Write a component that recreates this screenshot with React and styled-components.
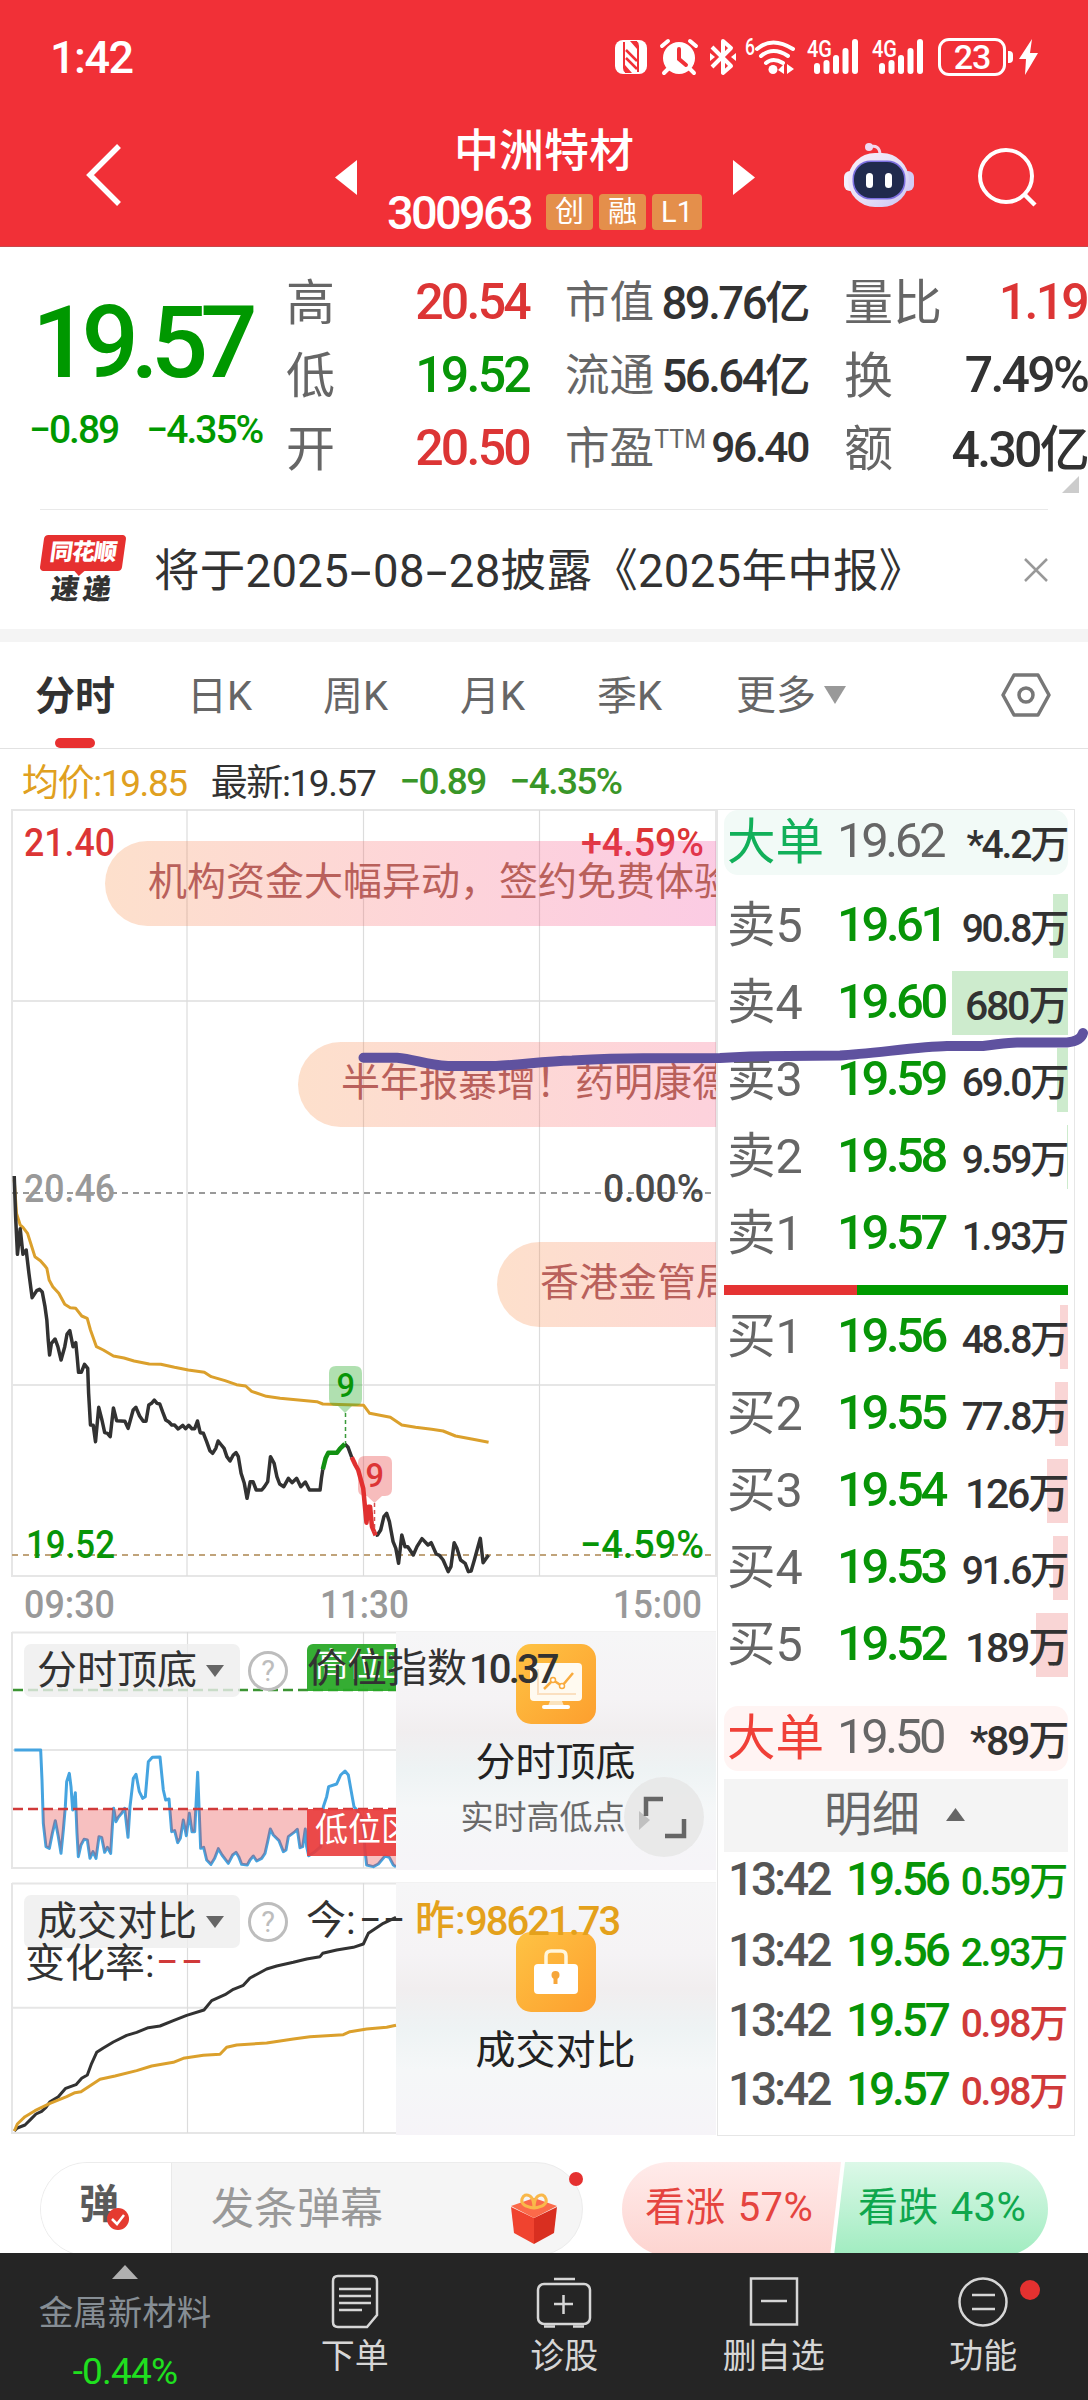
import styled, { createGlobalStyle } from "styled-components";

const RED = "#dc3535";
const GREEN = "#079507";
const DARK = "#323232";
const GREY = "#666";

const GlobalStyle = createGlobalStyle`
    * {
        box-sizing: border-box;
    }
    body {
        margin: 0;
        background: #fff;
        font-family: Roboto, "Noto Sans CJK SC", sans-serif;
        color: ${DARK};
    }
    svg {
        display: block;
        flex: none;
        overflow: visible;
    }
`;

const Page = styled.div`
    position: relative;
    width: 1088px;
    height: 2400px;
    overflow: hidden;
    display: flex;
    flex-direction: column;
`;

/* ---------- header ---------- */

const Header = styled.header`
    height: 247px;
    flex: none;
    background: #f13037;
    color: #fff;
    border-bottom: 1px solid #c9474b;
`;

const StatusBar = styled.div`
    height: 114px;
    padding: 0 50px 0 50px;
    display: flex;
    align-items: center;
    justify-content: space-between;
`;

const Clock = styled.div`
    font-size: 45px;
    font-weight: 500;
    letter-spacing: -1.5px;
`;

const StatusIcons = styled.div`
    display: flex;
    align-items: center;
    height: 38px;
`;

const Battery = styled.div`
    width: 68px;
    height: 38px;
    margin-left: 14px;
    border: 3px solid #fff;
    border-radius: 11px;
    text-align: center;
    font-size: 34px;
    line-height: 33px;
    font-weight: 500;
    letter-spacing: -1px;
`;

const BatteryTip = styled.div`
    width: 5px;
    height: 12px;
    margin: 0 6px 0 2px;
    border-radius: 0 4px 4px 0;
    background: #fff;
`;

const NavBar = styled.div`
    height: 132px;
    display: flex;
    align-items: flex-start;
    padding-left: 87px;
`;

const StockTitle = styled.div`
    width: 376px;
    display: flex;
    flex-direction: column;
    align-items: center;
`;

const StockName = styled.div`
    margin-top: 5px;
    margin-left: -2px;
    font-size: 45px;
    line-height: 65px;
    font-weight: 500;
`;

const StockCode = styled.div`
    display: flex;
    align-items: center;
    gap: 6px;
    height: 56px;
    margin-left: -1px;
    font-size: 47px;
    font-weight: 500;
    letter-spacing: -2.7px;
`;

const Badge = styled.span`
    height: 36px;
    min-width: 47px;
    padding: 0 9px;
    border-radius: 4px;
    background: #e48f4b;
    font-size: 29px;
    line-height: 36px;
    font-weight: 400;
    letter-spacing: 0;
`;

/* ---------- quote ---------- */

const Quote = styled.section`
    position: relative;
    height: 262px;
    flex: none;
    display: flex;
    padding-top: 18px;
`;

const PriceBox = styled.div`
    width: 286px;
    padding-left: 29px;
    color: #009800;
`;

const BigPrice = styled.div`
    margin-top: 15px;
    padding-left: 3px;
    font-size: 101px;
    line-height: 126px;
    font-weight: 500;
    letter-spacing: -8px;
`;

const Change = styled.div`
    display: flex;
    gap: 28px;
    font-size: 39px;
    line-height: 48px;
    font-weight: 500;
    letter-spacing: -2px;
`;

const StatColumn = styled.div`
    width: ${(p) => p.$width}px;
    margin-right: ${(p) => p.$gap}px;
    font-size: ${(p) => p.$size}px;
`;

const Stat = styled.div`
    height: 73px;
    display: flex;
    align-items: center;
    justify-content: space-between;
    white-space: nowrap;
`;

const StatLabel = styled.span`
    padding-bottom: 6px;
    color: ${GREY};
    font-size: 0.98em;
    sup {
        font-size: 25px;
        line-height: 0;
        vertical-align: 16px;
    }
`;

const StatValue = styled.span`
    padding-bottom: ${(p) => (p.$mixed ? 6 : 0)}px;
    color: ${(p) => p.$color || DARK};
    font-size: ${(p) => p.$size || "1em"};
    font-weight: 500;
    letter-spacing: -0.055em;
`;

const Corner = styled.div`
    position: absolute;
    right: 9px;
    bottom: 16px;
    border-left: 17px solid transparent;
    border-bottom: 17px solid #ccc;
`;

/* ---------- news ---------- */

const News = styled.section`
    height: 120px;
    flex: none;
    margin: 0 40px;
    border-top: 1px solid #e9e9e9;
    display: flex;
    align-items: center;
`;

const NewsLogo = styled.div`
    width: 86px;
    height: 70px;
    margin-right: 28px;
    display: flex;
    flex-direction: column;
    align-items: center;
    font-weight: 900;
`;

const LogoTop = styled.div`
    position: relative;
    width: 82px;
    height: 36px;
    border-radius: 4px;
    transform: skewX(-8deg);
    background: #e6302f;
    color: #fff;
    font-size: 23px;
    line-height: 36px;
    text-align: center;
    letter-spacing: -1px;
    &::after {
        content: "";
        position: absolute;
        left: 34px;
        top: 35px;
        border: 6px solid transparent;
        border-top-color: #e6302f;
    }
`;

const LogoBottom = styled.div`
    transform: skewX(-8deg);
    font-size: 28px;
    line-height: 38px;
    letter-spacing: 4px;
`;

const NewsText = styled.div`
    flex: 1;
    padding-bottom: 5px;
    font-size: 45.5px;
    white-space: nowrap;
    letter-spacing: 0.3px;
`;

const Dash = styled.span`
    display: inline-block;
    width: 24px;
    text-align: center;
    transform: scaleX(1.7);
`;

const Band = styled.div`
    height: 13px;
    flex: none;
    background: #f4f4f4;
`;

/* ---------- tabs ---------- */

const Tabs = styled.nav`
    height: 107px;
    flex: none;
    display: flex;
    border-bottom: 1px solid #e2e2e2;
    padding-left: 35px;
`;

const Tab = styled.div`
    position: relative;
    width: ${(p) => p.$width}px;
    height: 106px;
    line-height: 109px;
    font-size: 40px;
    white-space: nowrap;
    color: ${(p) => (p.$active ? DARK : GREY)};
    font-weight: ${(p) => (p.$active ? 700 : 400)};
    &::after {
        content: "";
        display: ${(p) => (p.$active ? "block" : "none")};
        position: absolute;
        left: 20px;
        bottom: 0;
        width: 40px;
        height: 10px;
        border-radius: 5px;
        background: #e83030;
    }
`;

const More = styled(Tab)`
    display: flex;
    align-items: center;
    gap: 8px;
`;

const InfoLine = styled.div`
    height: 60px;
    flex: none;
    padding: 2px 0 0 22px;
    display: flex;
    align-items: center;
    gap: 24px;
    font-size: 37px;
    letter-spacing: -1.4px;
    white-space: nowrap;
    font-weight: 500;
    span:nth-child(1) {
        color: #e0a020;
        font-weight: 400;
    }
    span:nth-child(2) {
        font-weight: 400;
    }
    span:nth-child(n + 3) {
        padding-top: 2px;
        color: #399628;
        letter-spacing: -1.6px;
    }
`;

/* ---------- charts ---------- */

const Body = styled.main`
    height: 1328px;
    flex: none;
    display: flex;
`;

const Charts = styled.div`
    width: 717px;
    display: flex;
    flex-direction: column;
`;

const MainChart = styled.div`
    position: relative;
    height: 823px;
    overflow: hidden;
`;

const Bullet = styled.div`
    position: absolute;
    left: ${(p) => p.$x}px;
    top: ${(p) => p.$y}px;
    right: 1px;
    height: 85px;
    padding-left: 43px;
    overflow: hidden;
    border-radius: 43px 0 0 43px;
    background: linear-gradient(90deg, rgba(247, 131, 51, 0.25), rgba(249, 84, 106, 0.25) 340px, rgba(240, 47, 150, 0.25) 640px);
    color: #b9605b;
    font-size: 39px;
    line-height: 83px;
    white-space: nowrap;
`;

const SubChart = styled.div`
    position: relative;
    height: ${(p) => p.$height}px;
    margin-bottom: ${(p) => p.$gap || 0}px;
`;

const ChipRow = styled.div`
    position: absolute;
    left: 24px;
    top: 12px;
    display: flex;
    align-items: center;
    gap: 8px;
`;

const Chip = styled.div`
    width: 216px;
    height: 53px;
    padding: 0 16px 0 13px;
    border-radius: 7px;
    background: rgba(238, 238, 238, 0.8);
    display: flex;
    align-items: center;
    justify-content: space-between;
    font-size: 40px;
    line-height: 50px;
`;

const Help = styled.div`
    width: 40px;
    height: 40px;
    border: 3px solid #bdbdbd;
    border-radius: 50%;
    color: #bdbdbd;
    font-size: 29px;
    line-height: 35px;
    text-align: center;
`;

const Readout = styled.div`
    position: absolute;
    left: ${(p) => p.$x}px;
    top: ${(p) => p.$y}px;
    font-size: 40px;
    line-height: 48px;
    white-space: nowrap;
    font-weight: ${(p) => p.$weight || 400};
    color: ${(p) => p.$color || DARK};
    letter-spacing: ${(p) => p.$spacing || 0}px;
`;

const ZoneTag = styled.div`
    position: absolute;
    left: 307px;
    top: ${(p) => p.$y}px;
    width: 89px;
    height: 47px;
    overflow: hidden;
    padding-left: 8px;
    border-radius: ${(p) => p.$radius};
    background: ${(p) => p.$color};
    color: #fff;
    font-size: 33px;
    line-height: 42px;
    white-space: nowrap;
`;

const Cover = styled.div`
    position: absolute;
    left: 396px;
    top: 0;
    width: 320px;
    height: 100%;
    padding-top: ${(p) => p.$top}px;
    display: flex;
    flex-direction: column;
    align-items: center;
    background: linear-gradient(#f6f6f7, #f5f3f5 28%, #f1eeef 42%, #eef3f4 58%, #f5f7f8 74%, #f6f4f8);
`;

const CoverTitle = styled.div`
    margin-top: 12px;
    margin-left: -1px;
    font-size: 40px;
    line-height: 54px;
    color: #222;
`;

const CoverNote = styled.div`
    margin-left: -26px;
    font-size: 33px;
    line-height: 55px;
    color: #6a6a6a;
`;

const Expand = styled.div`
    position: absolute;
    left: 624px;
    top: 145px;
    width: 80px;
    height: 80px;
    border-radius: 50%;
    background: rgba(230, 230, 230, 0.85);
`;

/* ---------- order book ---------- */

const Book = styled.aside`
    width: 358px;
    height: 1327px;
    padding: 0 6px;
    border: 1px solid #e6e6e6;
    display: flex;
    flex-direction: column;
`;

const Level = styled.div`
    position: relative;
    height: 64px;
    flex: none;
    margin-bottom: 13px;
    padding: 0 1px 0 3px;
    display: flex;
    align-items: center;
    white-space: nowrap;
`;

const BigOrder = styled(Level)`
    height: 65px;
    margin: ${(p) => p.$margin};
    border-radius: 14px;
    background: ${(p) => p.$bg};
`;

const Depth = styled.div`
    position: absolute;
    right: 0;
    top: 0;
    height: 64px;
`;

const LevelName = styled.span`
    width: 110px;
    padding-bottom: 10px;
    font-size: 48.5px;
    color: ${(p) => p.$color || GREY};
`;

const LevelPrice = styled.span`
    width: 112px;
    padding-bottom: 4px;
    font-size: 49px;
    font-weight: ${(p) => (p.$color ? 400 : 500)};
    letter-spacing: -3.4px;
    color: ${(p) => p.$color || GREEN};
`;

const LevelVolume = styled.span`
    position: relative;
    flex: 1;
    padding-bottom: 3px;
    text-align: right;
    font-size: ${(p) => (p.$large ? 41 : 39)}px;
    font-weight: 500;
    letter-spacing: -2.2px;
`;

const Ratio = styled.div`
    height: 10px;
    flex: none;
    margin: 6px 0 10px;
    background: linear-gradient(90deg, #e53333 133px, #009a00 133px);
`;

const DetailHead = styled.div`
    height: 73px;
    flex: none;
    background: #f4f4f4;
    color: ${GREY};
    display: flex;
    align-items: center;
    padding: 0 0 2px 100px;
    gap: 26px;
    font-size: 48px;
    line-height: 64px;
`;

const Tick = styled.div`
    height: ${(p) => p.$height}px;
    flex: none;
    display: flex;
    align-items: center;
    padding: 0 2px 0 4px;
    font-weight: 500;
    white-space: nowrap;
    letter-spacing: -3.1px;
    font-size: 46px;
    span {
        padding-bottom: 2px;
    }
    span:nth-child(1) {
        width: 118px;
        color: #555;
    }
    span:nth-child(2) {
        width: 103px;
        color: ${GREEN};
    }
    span:nth-child(3) {
        flex: 1;
        padding: 0 0 3px;
        text-align: right;
        font-size: 39px;
        letter-spacing: -2.2px;
        color: ${(p) => p.$color};
    }
`;

/* ---------- bottom ---------- */

const DanmuBar = styled.section`
    height: 116px;
    flex: none;
    padding: 25px 40px 0;
    display: flex;
    gap: 39px;
    overflow: hidden;
`;

const DanmuBox = styled.div`
    position: relative;
    width: 543px;
    height: 94px;
    border: 1px solid #ececec;
    border-radius: 47px;
    background: #f5f5f5;
    display: flex;
`;

const DanmuSwitch = styled.div`
    position: relative;
    width: 131px;
    border-right: 1px solid #e9e9e9;
    border-radius: 47px 0 0 47px;
    background: #fff;
    color: #5a5a5a;
    font-size: 40px;
    line-height: 84px;
    font-weight: 700;
    padding-left: 38px;
    svg {
        position: absolute;
        left: 66px;
        top: 45px;
    }
`;

const DanmuInput = styled.div`
    flex: 1;
    padding-left: 39px;
    font-size: 43px;
    line-height: 92px;
    color: #999;
`;

const Dot = styled.i`
    position: absolute;
    width: ${(p) => p.$size}px;
    height: ${(p) => p.$size}px;
    border-radius: 50%;
    background: #e53130;
    left: ${(p) => p.$x}px;
    top: ${(p) => p.$y}px;
`;

const Gift = styled.div`
    width: 46px;
    padding-top: 30px;
    margin-right: 25px;
`;

const Votes = styled.div`
    width: 426px;
    height: 94px;
    border-radius: 47px;
    overflow: hidden;
    display: flex;
    font-size: 40px;
    line-height: 91px;
    white-space: nowrap;
    word-spacing: 2px;
    letter-spacing: 0.3px;
`;

const VoteUp = styled.div`
    width: 219px;
    padding-left: 23px;
    color: #e5443f;
    background: linear-gradient(#ffebea, #fdd4d0);
    clip-path: polygon(0 0, 100% 0, calc(100% - 11px) 100%, 0 100%);
`;

const VoteDown = styled.div`
    flex: 1;
    margin-left: -7px;
    padding-left: 24px;
    color: #0fa74d;
    background: linear-gradient(#dcf8e8, #a0ecc0);
    clip-path: polygon(11px 0, 100% 0, 100% 100%, 0 100%);
`;

const BottomNav = styled.nav`
    height: 147px;
    flex: none;
    display: flex;
    background: #252525;
    color: #d6d6d6;
    font-size: 34px;
`;

const Sector = styled.div`
    width: 250px;
    padding-top: 12px;
    display: flex;
    flex-direction: column;
    align-items: center;
    color: #868e95;
    font-size: 34.5px;
    line-height: 69px;
    strong {
        font-size: 37px;
        font-weight: 400;
        line-height: 48px;
        letter-spacing: -0.8px;
        color: #1fe01f;
    }
`;

const NavItem = styled.div`
    position: relative;
    width: 209.5px;
    padding-top: 20px;
    display: flex;
    flex-direction: column;
    align-items: center;
    line-height: 55px;
`;

/* Pen stroke drawn by hand over the page */
const PenLayer = styled.svg`
    position: absolute;
    left: 0;
    top: 1020px;
`;

/* ---------- icons ---------- */

const Signal = ({ ml }) => (
    <svg width="52" height="38" viewBox="0 0 52 38" style={{ marginLeft: ml }} fill="#fff">
        <text x="0" y="19" fontSize="23" fontWeight="500" textLength="25" lengthAdjust="spacingAndGlyphs">4G</text>
        <rect x="7" y="25" width="6" height="11" rx="3" />
        <rect x="16.500" y="22" width="6" height="14" rx="3" />
        <rect x="26" y="17" width="6" height="19" rx="3" />
        <rect x="35.500" y="10" width="6" height="26" rx="3" />
        <rect x="45" y="1" width="6" height="35" rx="3" />
    </svg>
);

const NfcIcon = () => (
    <svg width="32" height="38" viewBox="0 0 32 38">
        <rect x="0" y="2" width="32" height="34" rx="8" fill="#fff" />
        <path d="M9 4v26q0 3 2 4M23 34V8q0-3-2-4" stroke="#f13037" strokeWidth="2" fill="none" />
        <path d="M11 12L22 23M11 20L22 31" stroke="#f13037" strokeWidth="2.500" fill="none" />
        <path d="M15 3L22 11V3M17 35L10 27v8" fill="#f13037" />
    </svg>
);

const AlarmIcon = () => (
    <svg width="38" height="38" viewBox="0 0 38 38" style={{ marginLeft: 13 }}>
        <circle cx="19" cy="20" r="16" fill="#fff" />
        <path d="M2 8l6-5M36 8l-6-5M8 31l-4 4M30 31l4 4" stroke="#fff" strokeWidth="4" strokeLinecap="round" />
        <path d="M19 11v10l7 6" stroke="#f13037" strokeWidth="4" fill="none" strokeLinecap="round" />
    </svg>
);

const BluetoothIcon = () => (
    <svg width="26" height="38" viewBox="0 0 26 38" style={{ marginLeft: 12 }}>
        <path d="M2 9l19 19-8 7V3l8 7L2 29" stroke="#fff" strokeWidth="4" fill="none" strokeLinejoin="round" />
        <path d="M0 15l5 4-5 4zM26 15l-5 4 5 4z" fill="#fff" />
    </svg>
);

const WifiIcon = () => (
    <svg width="50" height="38" viewBox="0 0 50 38" style={{ marginLeft: 9 }}>
        <text x="0" y="17" fontSize="23" fontWeight="500" fill="#fff" textLength="10" lengthAdjust="spacingAndGlyphs">6</text>
        <path d="M12 11q15-13 36 0M16 18q12-10 27 0M21 25q7-6 17 0" stroke="#fff" strokeWidth="4" fill="none" strokeLinecap="round" />
        <circle cx="28" cy="31.500" r="4.500" fill="#fff" />
        <path d="M33 32l6-6v10zM49 31l-7-5v10z" fill="#fff" />
    </svg>
);

const BoltIcon = () => (
    <svg width="19" height="36" viewBox="0 0 19 36">
        <path d="M13 0L0 20h7L6 36 19 14h-8z" fill="#fff" />
    </svg>
);

const BackIcon = () => (
    <svg width="40" height="66" viewBox="0 0 40 66" style={{ marginTop: 28, marginLeft: -2, marginRight: 210 }}>
        <path d="M34 4L5 33l29 29" stroke="#fff" strokeWidth="5.500" fill="none" />
    </svg>
);

const Arrow = ({ flip }) => (
    <svg width="22" height="35" viewBox="0 0 22 35" style={{ marginTop: 46 }}>
        <path d={flip ? "M0 0v35l22-17.500z" : "M22 0v35L0 17.500z"} fill="#fff" />
    </svg>
);

const RobotIcon = () => (
    <svg width="70" height="66" viewBox="0 0 70 66" style={{ marginTop: 28, marginLeft: 89 }}>
        <defs>
            <linearGradient id="shell" x1="0" y1="0" x2="1" y2="1">
                <stop offset="0" stopColor="#fbeef8" />
                <stop offset="0.600" stopColor="#e3def7" />
                <stop offset="1" stopColor="#c9c2f2" />
            </linearGradient>
        </defs>
        <path d="M25 5q11-3 11 8" stroke="#f3d6ea" strokeWidth="3" fill="none" />
        <circle cx="25" cy="5" r="4" fill="#efd9f2" />
        <rect x="0" y="29" width="12" height="20" rx="6" fill="#f3effc" />
        <rect x="58" y="29" width="12" height="20" rx="6" fill="#d3ccf5" />
        <rect x="4" y="11" width="61" height="54" rx="27" fill="url(#shell)" />
        <rect x="8.500" y="18.500" width="53" height="39" rx="18" fill="#7c6fe0" />
        <rect x="10" y="20" width="50" height="36" rx="17" fill="#202a4d" />
        <rect x="22" y="31" width="7" height="15" rx="3.500" fill="#fff" />
        <rect x="41" y="31" width="7" height="15" rx="3.500" fill="#fff" />
    </svg>
);

const SearchIcon = () => (
    <svg width="60" height="60" viewBox="0 0 60 60" style={{ marginTop: 33, marginLeft: 64 }}>
        <circle cx="28" cy="29" r="26" stroke="#fff" strokeWidth="4" fill="none" />
        <path d="M46 47l11 11" stroke="#fff" strokeWidth="4.500" />
    </svg>
);

const Caret = ({ up, w = 18, h = 12, color = "#666" }) => (
    <svg width={w} height={h} viewBox="0 0 18 12" preserveAspectRatio="none">
        <path d={up ? "M0 12h18L9 0z" : "M0 0h18L9 12z"} fill={color} />
    </svg>
);

/* ---------- data ---------- */

// the intraday series share one grid of 2.178 x 3 units per pixel
const priceStart = "31,138 34,260 38,373 44,296 50,373 57,360 63,430 70,503 80,482 86,478 92,486 98,530 102,570 105,630 108,675 112,640 120,627 126,650 133,690 141,650 146,612 152,602 159,650 165,638 168,680 171,727 177,727 184,703 191,715 193,790 197,885 203,886 208,935 215,832 222,870 228,908 234,910 240,920 247,834 254,872 272,874 279,895 290,840 296,832 304,858 312,874 318,874 324,825 330,820 336,810 342,820 348,822 354,845 361,870 368,876 374,885 380,885 388,897 398,886 404,896 411,886 418,896 424,896 430,873 436,908 443,910 450,935 457,962 463,970 470,955 475,933 482,945 488,955 494,980 501,993 508,975 514,968 519,980 525,1030 532,1060 538,1105 545,1055 551,1055 558,1080 570,1080 576,1070 583,1055 589,980 597,1000 603,1040 609,1062 618,1070 628,1045 636,1058 646,1045 655,1070 665,1056 674,1080 697,1080 700,1045 703,1018";
const priceRise = "703,1018 709,985 715,968 734,968 741,955 751,942";
const priceTurn = "751,942 758,952 766,982";
const priceFall = "766,982 774,1005 780,1020 791,1075 798,1178 802,1130 806,1130 810,1190 818,1216";
const priceEnd = "818,1216 822,1215 829,1200 836,1160 842,1150 848,1175 856,1235 862,1255 868,1300 875,1215 882,1250 888,1250 900,1275 908,1250 919,1226 932,1245 939,1238 950,1272 957,1276 965,1290 976,1325 982,1310 989,1238 995,1255 1003,1290 1013,1300 1020,1325 1026,1323 1033,1290 1040,1255 1046,1225 1052,1298 1064,1275";
const average = "31,150 36,250 44,285 50,292 60,310 68,345 76,380 88,392 98,408 102,415 107,450 115,470 128,490 141,523 153,533 165,535 178,558 190,565 197,600 210,650 225,660 247,678 270,684 292,693 325,702 350,703 380,712 410,720 445,727 460,740 490,752 515,764 535,768 548,784 580,799 610,805 650,810 690,815 703,822 792,826 805,850 850,862 875,885 905,892 940,898 965,903 992,918 1030,928 1064,937";

const position = "43,390 122,390 126,480 130,610 138,680 148,685 157,640 166,602 175,650 183,700 190,630 196,560 200,485 208,460 213,500 218,570 226,518 231,640 235,710 243,675 252,658 262,660 270,715 279,695 288,715 297,650 305,652 314,697 322,682 332,700 337,620 341,565 348,605 356,590 365,580 374,565 384,652 390,560 400,475 408,463 418,515 428,535 436,530 445,425 457,412 480,411 490,510 497,540 507,537 515,635 524,632 533,668 541,655 550,600 559,647 568,580 576,635 584,635 593,457 602,685 611,682 620,720 633,733 644,715 655,686 666,705 685,730 698,705 708,697 716,710 725,733 742,735 750,720 760,708 770,723 785,715 795,700 803,665 811,627 820,645 837,662 850,695 858,690 865,650 885,635 892,628 900,683 908,680 916,627 920,680 926,707 945,695 962,680 970,560 980,530 986,500 1010,492 1022,465 1035,453 1045,465 1053,510 1062,560 1075,575 1088,600 1095,690 1100,735 1120,740 1135,732 1155,708 1168,712 1180,735 1188,740";

const turnoverToday = "43,1533 52,1524 75,1515 92,1498 108,1482 125,1474 138,1462 150,1445 175,1430 197,1405 228,1394 245,1375 262,1365 275,1330 290,1297 310,1284 340,1266 380,1246 410,1237 445,1223 480,1218 520,1202 560,1186 612,1170 635,1142 675,1124 700,1108 730,1096 750,1074 800,1047 830,1038 880,1027 920,1017 960,1010 968,1000 1010,990 1060,982 1090,972 1105,940 1150,910 1188,892";
const turnoverYesterday = "43,1533 52,1512 75,1490 105,1472 150,1450 200,1430 225,1418 243,1415 300,1378 345,1368 410,1352 455,1338 520,1327 550,1315 610,1306 660,1303 680,1282 710,1275 800,1269 880,1257 930,1250 1030,1244 1050,1235 1100,1227 1160,1222 1188,1216";

const bullets = [
    { x: 105, y: 32, text: "机构资金大幅异动，签约免费体验" },
    { x: 298, y: 233, text: "半年报暴增！药明康德" },
    { x: 497, y: 433, text: "香港金管局" },
];

const sells = [
    { name: "卖5", price: "19.61", volume: "90.8万", depth: 15 },
    { name: "卖4", price: "19.60", volume: "680万", depth: 116, large: true },
    { name: "卖3", price: "19.59", volume: "69.0万", depth: 11 },
    { name: "卖2", price: "19.58", volume: "9.59万", depth: 1 },
    { name: "卖1", price: "19.57", volume: "1.93万", depth: 0 },
];

const buys = [
    { name: "买1", price: "19.56", volume: "48.8万", depth: 8 },
    { name: "买2", price: "19.55", volume: "77.8万", depth: 13 },
    { name: "买3", price: "19.54", volume: "126万", depth: 21, large: true },
    { name: "买4", price: "19.53", volume: "91.6万", depth: 15 },
    { name: "买5", price: "19.52", volume: "189万", depth: 32, large: true },
];

const ticks = [
    { price: "19.56", volume: "0.59万", color: GREEN, height: 71 },
    { price: "19.56", volume: "2.93万", color: GREEN, height: 71 },
    { price: "19.57", volume: "0.98万", color: "#d03a3a", height: 70 },
    { price: "19.57", volume: "0.98万", color: "#d03a3a", height: 67 },
];

/* ---------- parts ---------- */

const Line = ({ points, color = DARK, width = 3.5 }) => (
    <polyline points={points} fill="none" stroke={color} strokeWidth={width} strokeLinejoin="round" vectorEffect="non-scaling-stroke" />
);

const AxisText = ({ x, y, w, color, weight = 500, size = 39.5, children }) => (
    <text x={x} y={y} fill={color} fontSize={size} fontWeight={weight} textLength={w} lengthAdjust="spacingAndGlyphs">
        {children}
    </text>
);

const IntradayChart = () => (
    <MainChart>
        <svg width="717" height="823" viewBox="0 809 717 823">
            <g stroke="#e6e6e6" strokeWidth="2" fill="none">
                <path d="M12 810H716V1576H12zM12 1001H716M12 1385H716" />
                <path d="M187 810V1576M363.500 810V1576M539.500 810V1576" strokeWidth="1.200" stroke="#dcdcdc" />
            </g>
            <path d="M12 1193H716" stroke="#999" strokeWidth="2" strokeDasharray="6 5" />
            <path d="M12 1555H716" stroke="#c0a37a" strokeWidth="2" strokeDasharray="6 5" />
            <AxisText x="24" y="856" w="91" color={RED}>21.40</AxisText>
            <AxisText x="581" y="856" w="123" color={RED}>+4.59%</AxisText>
            <AxisText x="24" y="1202" w="91" color="#999">20.46</AxisText>
            <AxisText x="603" y="1202" w="101" color="#4a4a4a">0.00%</AxisText>
            <AxisText x="26" y="1558" w="89" color={GREEN}>19.52</AxisText>
            <AxisText x="580" y="1558" w="124" color={GREEN}>−4.59%</AxisText>
            <AxisText x="24" y="1618" w="91" color="#999">09:30</AxisText>
            <AxisText x="320" y="1618" w="89" color="#999">11:30</AxisText>
            <AxisText x="613" y="1618" w="89" color="#999">15:00</AxisText>
            <g transform="translate(0 1130) scale(0.4592 0.33333)">
                <Line points={average} color="#dba02c" width={3} />
                <Line points={priceStart} />
                <Line points={priceTurn} />
                <Line points={priceEnd} />
                <Line points={priceRise} color="#129012" width={4.5} />
                <Line points={priceFall} color="#e03030" width={4.5} />
            </g>
            <path d="M336 1366h19q7 0 7 7v26q0 7-7 7h-3l-7 7-7-7h-2q-7 0-7-7v-26q0-7 7-7z" fill="#2fae2f" fillOpacity="0.380" />
            <AxisText x="336.500" y="1397" w="18.500" color="#079507" size="33">9</AxisText>
            <path d="M345.500 1413V1444" stroke="#3a9a3a" strokeWidth="1.500" strokeDasharray="4 3" />
            <path d="M365 1456h20q7 0 7 7v26q0 7-7 7h-3l-7.500 7-7.500-7h-2q-7 0-7-7v-26q0-7 7-7z" fill="#e53030" fillOpacity="0.320" />
            <AxisText x="365.500" y="1487" w="18.500" color={RED} size="33">9</AxisText>
            <path d="M374.500 1503V1532" stroke="#d45050" strokeWidth="1.500" strokeDasharray="4 3" />
        </svg>
        {bullets.map((b) => (
            <Bullet key={b.text} $x={b.x} $y={b.y}>{b.text}</Bullet>
        ))}
    </MainChart>
);

const PositionChart = () => (
    <SubChart $height={238} $gap={13}>
        <svg width="717" height="238" viewBox="0 1632 717 238">
            <clipPath id="low"><rect x="0" y="567" width="1200" height="300" /></clipPath>
            <path d="M12 1632.500H716M12 1632V1868H716M12 1750H716" stroke="#e6e6e6" strokeWidth="2" fill="none" />
            <path d="M187.500 1632V1868M363.500 1632V1868" stroke="#dcdcdc" strokeWidth="1.200" />
            <g transform="translate(0 1620) scale(0.33333)">
                <Line points={position} color="#45a4e0" width={3} />
                <polygon points={`${position} 1188,567 43,567`} fill="#e53030" fillOpacity="0.300" clipPath="url(#low)" />
            </g>
            <path d="M13 1690H396" stroke="#3b9432" strokeWidth="2.500" strokeDasharray="10 5" />
            <path d="M13 1809H396" stroke="#d03a3a" strokeWidth="2.500" strokeDasharray="10 5" />
        </svg>
        <ZoneTag $y={12} $radius="6px 0 0 0" $color="rgba(40, 168, 38, 0.94)">高位区</ZoneTag>
        <ZoneTag $y={177} $radius="0" $color="rgba(233, 60, 60, 0.9)">低位区</ZoneTag>
        <Cover $top={12}>
            <svg width="80" height="80" viewBox="0 0 80 80">
                <defs>
                    <linearGradient id="gold" x1="0" y1="0" x2="1" y2="1">
                        <stop offset="0" stopColor="#fec344" />
                        <stop offset="1" stopColor="#fd9f2e" />
                    </linearGradient>
                </defs>
                <rect width="80" height="80" rx="15" fill="url(#gold)" />
                <rect x="14" y="19" width="52" height="38" rx="4" fill="#fffaf0" />
                <path d="M34 57h12l2 5H32z" fill="#fbe3bd" />
                <rect x="26" y="61" width="28" height="4" rx="2" fill="#fff" />
                <path d="M22 25v25h38" stroke="#fbe0c0" strokeWidth="2" fill="none" />
                <path d="M28 45l9-9 9 6 11-13" stroke="#f9ab3e" strokeWidth="2.500" fill="none" />
                <circle cx="37" cy="36" r="2.500" fill="#fff" stroke="#f9ab3e" strokeWidth="1.500" />
                <circle cx="46" cy="42" r="2.500" fill="#fff" stroke="#f9ab3e" strokeWidth="1.500" />
            </svg>
            <CoverTitle>分时顶底</CoverTitle>
            <CoverNote>实时高低点</CoverNote>
        </Cover>
        <ChipRow>
            <Chip>分时顶底<Caret /></Chip>
            <Help>?</Help>
        </ChipRow>
        <Readout $x={307} $y={13}>价位指数</Readout>
        <Readout $x={469} $y={14} $weight={500} $spacing={-2.9}>10.37</Readout>
        <Expand>
            <svg width="80" height="80" viewBox="0 0 80 80">
                <path d="M15 34l11 9-11 10z" fill="#c0c0c0" />
                <path d="M22 39V22h17M60 42V59H41" stroke="#666" strokeWidth="4.500" fill="none" />
            </svg>
        </Expand>
    </SubChart>
);

const PanelLines = styled.svg`
    position: absolute;
    left: 0;
    top: 0;
`;

const TurnoverChart = () => (
    <SubChart $height={252}>
        <svg width="717" height="252" viewBox="0 1883 717 252">
            <path d="M12 1883.500H716M12 1883V2133H716M12 2007.700H716" stroke="#e6e6e6" strokeWidth="2" fill="none" />
            <path d="M187.500 1883V2133M363.500 1883V2133" stroke="#dcdcdc" strokeWidth="1.200" />
        </svg>
        <ChipRow>
            <Chip>成交对比<Caret /></Chip>
            <Help>?</Help>
        </ChipRow>
        <Cover $top={49}>
            <svg width="80" height="80" viewBox="0 0 80 80">
                <rect width="80" height="80" rx="15" fill="url(#gold)" />
                <path d="M30 34V24q0-5 5-5h10q5 0 5 5v10" stroke="#fff6dc" strokeWidth="3.500" fill="none" />
                <rect x="18" y="32" width="44" height="30" rx="4" fill="#fff" />
                <circle cx="39.500" cy="43" r="4" fill="#f6a63a" />
                <path d="M39.500 43v9" stroke="#f6a63a" strokeWidth="4" />
            </svg>
            <CoverTitle>成交对比</CoverTitle>
        </Cover>
        <Readout $x={306} $y={14}>今:</Readout>
        <Readout $x={359} $y={14} $spacing={1}>−−</Readout>
        <Readout $x={415} $y={14} $color="#e4a11b" $weight={500}>昨:</Readout>
        <Readout $x={465} $y={15} $color="#e4a11b" $weight={500} $spacing={-2}>98621.73</Readout>
        <Readout $x={25} $y={57}>变化率:</Readout>
        <Readout $x={156} $y={56} $color="#d03a3a" $spacing={2}>−−</Readout>
        <PanelLines width="396" height="252" viewBox="0 1883 396 252">
            <g transform="translate(0 1620) scale(0.33333)">
                <Line points={turnoverToday} width={3} />
                <Line points={turnoverYesterday} color="#dba02c" width={3} />
            </g>
        </PanelLines>
    </SubChart>
);

const Levels = ({ rows, color }) =>
    rows.map((r) => (
        <Level key={r.name}>
            <Depth style={{ width: r.depth, background: color }} />
            <LevelName>{r.name}</LevelName>
            <LevelPrice>{r.price}</LevelPrice>
            <LevelVolume $large={r.large}>{r.volume}</LevelVolume>
        </Level>
    ));

const OrderBook = () => (
    <Book>
        <BigOrder $bg="#f2faf7" $margin="0 0 19px">
            <LevelName $color="#12b05a">大单</LevelName>
            <LevelPrice $color={GREY}>19.62</LevelPrice>
            <LevelVolume>*4.2万</LevelVolume>
        </BigOrder>
        <Levels rows={sells} color="#cdebcd" />
        <Ratio />
        <Levels rows={buys} color="#f9d5d5" />
        <BigOrder $bg="#fff4f3" $margin="16px 0 8px">
            <LevelName $color="#f04038">大单</LevelName>
            <LevelPrice $color={GREY}>19.50</LevelPrice>
            <LevelVolume $large>*89万</LevelVolume>
        </BigOrder>
        <DetailHead>明细<Caret up w={19} h={13} /></DetailHead>
        {ticks.map((t, i) => (
            <Tick key={i} $height={t.height} $color={t.color} style={i === 0 ? { marginTop: -8 } : undefined}>
                <span>13:42</span>
                <span>{t.price}</span>
                <span>{t.volume}</span>
            </Tick>
        ))}
    </Book>
);

const App = () => {
    return (
        <>
            <GlobalStyle />
            <Page>
                <Header>
                    <StatusBar>
                        <Clock>1:42</Clock>
                        <StatusIcons>
                            <NfcIcon />
                            <AlarmIcon />
                            <BluetoothIcon />
                            <WifiIcon />
                            <Signal ml={12} />
                            <Signal ml={13} />
                            <Battery>23</Battery>
                            <BatteryTip />
                            <BoltIcon />
                        </StatusIcons>
                    </StatusBar>
                    <NavBar>
                        <BackIcon />
                        <Arrow />
                        <StockTitle>
                            <StockName>中洲特材</StockName>
                            <StockCode>
                                300963
                                <Badge style={{ marginLeft: 9 }}>创</Badge>
                                <Badge>融</Badge>
                                <Badge>L1</Badge>
                            </StockCode>
                        </StockTitle>
                        <Arrow flip />
                        <RobotIcon />
                        <SearchIcon />
                    </NavBar>
                </Header>

                <Quote>
                    <PriceBox>
                        <BigPrice>19.57</BigPrice>
                        <Change>
                            <span>−0.89</span>
                            <span>−4.35%</span>
                        </Change>
                    </PriceBox>
                    <StatColumn $width={243} $gap={36} $size={50}>
                        <Stat><StatLabel>高</StatLabel><StatValue $color={RED}>20.54</StatValue></Stat>
                        <Stat><StatLabel>低</StatLabel><StatValue $color={GREEN}>19.52</StatValue></Stat>
                        <Stat><StatLabel>开</StatLabel><StatValue $color={RED}>20.50</StatValue></Stat>
                    </StatColumn>
                    <StatColumn $width={243} $gap={36} $size={45.5}>
                        <Stat><StatLabel>市值</StatLabel><StatValue $mixed>89.76亿</StatValue></Stat>
                        <Stat><StatLabel>流通</StatLabel><StatValue $mixed>56.64亿</StatValue></Stat>
                        <Stat><StatLabel>市盈<sup>TTM</sup></StatLabel><StatValue $size="42.5px">96.40</StatValue></Stat>
                    </StatColumn>
                    <StatColumn $width={243} $gap={0} $size={50}>
                        <Stat><StatLabel>量比</StatLabel><StatValue $color={RED}>1.19</StatValue></Stat>
                        <Stat><StatLabel>换</StatLabel><StatValue>7.49%</StatValue></Stat>
                        <Stat><StatLabel>额</StatLabel><StatValue $mixed>4.30亿</StatValue></Stat>
                    </StatColumn>
                    <Corner />
                </Quote>

                <News>
                    <NewsLogo>
                        <LogoTop>同花顺</LogoTop>
                        <LogoBottom>速递</LogoBottom>
                    </NewsLogo>
                    <NewsText>
                        将于2025<Dash>-</Dash>08<Dash>-</Dash>28披露《2025年中报》
                    </NewsText>
                    <svg width="24" height="24" viewBox="0 0 24 24">
                        <path d="M1 1l22 22M23 1L1 23" stroke="#999" strokeWidth="2.500" />
                    </svg>
                </News>
                <Band />

                <Tabs>
                    <Tab $width={152} $active>分时</Tab>
                    <Tab $width={136}>日K</Tab>
                    <Tab $width={137}>周K</Tab>
                    <Tab $width={137}>月K</Tab>
                    <Tab $width={139}>季K</Tab>
                    <More $width={265}>更多<Caret w={22} h={18} color="#999" /></More>
                    <svg width="50" height="106" viewBox="0 0 50 106">
                        <path d="M13 33h24l11 20-11 20H13L2 53z" stroke="#777" strokeWidth="3.500" fill="none" strokeLinejoin="round" />
                        <circle cx="25" cy="53" r="7" stroke="#777" strokeWidth="3.500" fill="none" />
                    </svg>
                </Tabs>
                <InfoLine>
                    <span>均价:19.85</span>
                    <span>最新:19.57</span>
                    <span>−0.89</span>
                    <span>−4.35%</span>
                </InfoLine>

                <Body>
                    <Charts>
                        <IntradayChart />
                        <PositionChart />
                        <TurnoverChart />
                    </Charts>
                    <OrderBook />
                </Body>

                <DanmuBar>
                    <DanmuBox>
                        <DanmuSwitch>
                            弹
                            <svg width="22" height="22" viewBox="0 0 22 22">
                                <circle cx="11" cy="11" r="11" fill="#e53a30" />
                                <path d="M5 11l5 5 7-9" stroke="#fff" strokeWidth="2.500" fill="none" />
                            </svg>
                        </DanmuSwitch>
                        <DanmuInput>发条弹幕</DanmuInput>
                        <Gift>
                            <svg width="46" height="52" viewBox="0 0 46 52">
                                <path d="M0 14l23 11v26L3 40z" fill="#f0432f" />
                                <path d="M46 14L23 25v26l20-11z" fill="#d92f20" />
                                <path d="M0 13L23 5l23 8-23 12z" fill="#fb6a4a" />
                                <path d="M23 15q-14-2-12-9 2-6 8-3 4 3 4 12 0-9 4-12 6-3 8 3 2 7-12 9z" stroke="#f9b84a" strokeWidth="3" fill="none" />
                            </svg>
                        </Gift>
                        <Dot $size={14} $x={528} $y={9} />
                    </DanmuBox>
                    <Votes>
                        <VoteUp>看涨 57%</VoteUp>
                        <VoteDown>看跌 43%</VoteDown>
                    </Votes>
                </DanmuBar>

                <BottomNav>
                    <Sector>
                        <Caret up w={26} h={14} color="#b0b0b0" />
                        金属新材料
                        <strong>-0.44%</strong>
                    </Sector>
                    <NavItem>
                        <svg width="50" height="56" viewBox="0 0 50 56" fill="none" stroke="#d6d6d6" strokeWidth="2.500">
                            <path d="M8 3h34q5 0 5 5v34L37 54H8q-5 0-5-5V8q0-5 5-5z" />
                            <path d="M9 16h32M9 23h32M9 30h32M9 37h23" />
                        </svg>
                        下单
                    </NavItem>
                    <NavItem>
                        <svg width="56" height="56" viewBox="0 0 56 56" fill="none" stroke="#d6d6d6" strokeWidth="2.500">
                            <rect x="2" y="11" width="52" height="40" rx="6" />
                            <path d="M18 6h21M18 31h19M27.500 22v19M8 53.500h11M37 53.500h11" />
                        </svg>
                        诊股
                    </NavItem>
                    <NavItem>
                        <svg width="50" height="56" viewBox="0 0 50 56" fill="none" stroke="#d6d6d6" strokeWidth="2.500">
                            <rect x="2" y="5.500" width="46" height="46" />
                            <path d="M12 28h26" />
                        </svg>
                        删自选
                    </NavItem>
                    <NavItem>
                        <svg width="50" height="56" viewBox="0 0 50 56" fill="none" stroke="#d6d6d6" strokeWidth="2.500">
                            <circle cx="25" cy="29" r="23.500" />
                            <path d="M14 22h23M14 36h23" />
                        </svg>
                        功能
                        <Dot $size={20} $x={141} $y={27} />
                    </NavItem>
                </BottomNav>

                <PenLayer width="1088" height="60" viewBox="0 1020 1088 60">
                    <path
                        d="M363.500 1057.700L397 1057.700C415 1059 425 1065 448 1066H496C520 1065 545 1061 572 1060.500C600 1059 620 1058.300 643 1058.300L720 1058L750 1056.500L840 1055.500C870 1054 920 1046.500 947 1046H983C1000 1044 1008 1042.400 1017 1042.400H1067Q1081 1041 1083 1033"
                        stroke="#5f529f"
                        strokeWidth="10"
                        strokeLinecap="round"
                        strokeLinejoin="round"
                        fill="none"
                    />
                </PenLayer>
            </Page>
        </>
    );
};

export default App;
